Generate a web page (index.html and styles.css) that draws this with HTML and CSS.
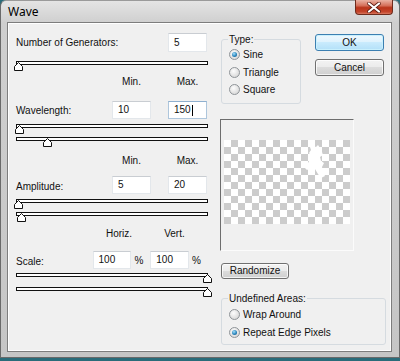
FILE: index.html
```html
<!DOCTYPE html>
<html>
<head>
<meta charset="utf-8">
<title>Wave</title>
<link rel="stylesheet" href="styles.css">
</head>
<body>
<div class="window">
  <div class="titlebar">
    <span class="title">Wave</span>
    <div class="close">
      <svg width="14" height="11" viewBox="0 0 14 11"><path d="M2 1.5 L12 9.5 M12 1.5 L2 9.5" stroke="#5a1a10" stroke-width="3.6" stroke-linecap="round"/><path d="M2 1.5 L12 9.5 M12 1.5 L2 9.5" stroke="#fff" stroke-width="2.2" stroke-linecap="round"/></svg>
    </div>
  </div>
  <div class="client">
    <div class="left">
      <div class="pair gen"><span class="label">Number of Generators:</span><span class="box c3">5</span></div>
      <div class="slider s1"><div class="track"></div><svg class="thumb" style="left:-2px" width="9" height="9" viewBox="0 0 9 9"><path d="M0.5 8.5 V4.5 L4.5 0.5 L8.5 4.5 V8.5 Z"/></svg></div>
      <div class="pair heads h1"><span class="c2">Min.</span><span class="c3">Max.</span></div>
      <div class="pair wl"><span class="label">Wavelength:</span><span class="box c2">10</span><span class="box c3 focus">150<i class="caret"></i></span></div>
      <div class="slider s2"><div class="track"></div><svg class="thumb" style="left:-1px" width="9" height="9" viewBox="0 0 9 9"><path d="M0.5 8.5 V4.5 L4.5 0.5 L8.5 4.5 V8.5 Z"/></svg></div>
      <div class="slider"><div class="track"></div><svg class="thumb" style="left:27px" width="9" height="9" viewBox="0 0 9 9"><path d="M0.5 8.5 V4.5 L4.5 0.5 L8.5 4.5 V8.5 Z"/></svg></div>
      <div class="pair heads h2"><span class="c2">Min.</span><span class="c3">Max.</span></div>
      <div class="pair amp"><span class="label low">Amplitude:</span><span class="box c2">5</span><span class="box c3">20</span></div>
      <div class="slider s2"><div class="track"></div><svg class="thumb" style="left:-2px" width="9" height="9" viewBox="0 0 9 9"><path d="M0.5 8.5 V4.5 L4.5 0.5 L8.5 4.5 V8.5 Z"/></svg></div>
      <div class="slider"><div class="track"></div><svg class="thumb" style="left:1px" width="9" height="9" viewBox="0 0 9 9"><path d="M0.5 8.5 V4.5 L4.5 0.5 L8.5 4.5 V8.5 Z"/></svg></div>
      <div class="scale-heads"><span class="hz">Horiz.</span><span class="vt">Vert.</span></div>
      <div class="scale"><span class="label low">Scale:</span><span class="box">100</span><span class="pct">%</span><span class="box">100</span><span class="pct">%</span></div>
      <div class="slider s3"><div class="track"></div><svg class="thumb" style="left:187px" width="9" height="9" viewBox="0 0 9 9"><path d="M0.5 8.5 V4.5 L4.5 0.5 L8.5 4.5 V8.5 Z"/></svg></div>
      <div class="slider s4"><div class="track"></div><svg class="thumb" style="left:187px" width="9" height="9" viewBox="0 0 9 9"><path d="M0.5 8.5 V4.5 L4.5 0.5 L8.5 4.5 V8.5 Z"/></svg></div>
    </div>
    <div class="right">
      <div class="top">
        <fieldset class="group type">
          <legend>Type:</legend>
          <div class="opt"><span class="radio on"></span>Sine</div>
          <div class="opt"><span class="radio"></span>Triangle</div>
          <div class="opt"><span class="radio"></span>Square</div>
        </fieldset>
        <div class="buttons">
          <div class="btn default">OK</div>
          <div class="btn">Cancel</div>
        </div>
      </div>
      <div class="preview">
        <div class="checker">
          <svg class="blob" width="24" height="36" viewBox="0 0 24 36"><path d="M6 1 L9 0 L10 3 L13 4 L15 2 L17 5 L16 8 L19 9 L20 12 L17 14 L18 18 L21 20 L19 24 L20 29 L22 33 L18 35 L15 31 L12 26 L8 25 L4 27 L1 24 L3 21 L6 19 L5 16 L8 13 L6 10 L8 7 Z" fill="#fff"/></svg>
        </div>
      </div>
      <div class="btn rand">Randomize</div>
      <fieldset class="group undef">
        <legend>Undefined Areas:</legend>
        <div class="opt"><span class="radio"></span>Wrap Around</div>
        <div class="opt"><span class="radio on"></span>Repeat Edge Pixels</div>
      </fieldset>
    </div>
  </div>
</div>
</body>
</html>
```

FILE: styles.css
```css
html, body {
  margin: 0;
  padding: 0;
}
body {
  width: 400px;
  height: 361px;
  overflow: hidden;
  background: #2a6c7a;
  font-family: "Liberation Sans", Arial, sans-serif;
  font-size: 10px;
  color: #111;
}
.window {
  box-sizing: border-box;
  width: 400px;
  height: 358px;
  border: 1px solid #6a6a6a;
  border-top-color: #9a9a9a;
  border-radius: 6px 6px 0 0;
  background: linear-gradient(#e4e4e4, #cfcfcf 22px, #c6c6c6);
  padding: 0 7px 5px 6px;
  display: flex;
  flex-direction: column;
}
.titlebar {
  height: 21px;
  display: flex;
  justify-content: space-between;
  align-items: center;
}
.title {
  font-family: "Noto Sans", "DejaVu Sans", sans-serif;
  font-size: 12px;
  margin-left: 1px;
  color: #000;
}
.close {
  box-sizing: border-box;
  align-self: flex-start;
  width: 38px;
  height: 15px;
  margin-top: -1px;
  margin-right: -1px;
  border: 1px solid #6e2b1c;
  border-top: none;
  border-radius: 0 0 4px 4px;
  background: linear-gradient(#eab2a3, #d5705a 40%, #b9341a 55%, #c4452b 85%, #d9785f);
  display: flex;
  align-items: center;
  justify-content: center;
}
.client {
  flex: 1;
  background: #f0f0f0;
  border: 1px solid #7d7d7d;
  box-shadow: inset 0 0 0 1px #fff;
  display: flex;
}
.left {
  width: 192px;
  margin-left: 8px;
  display: flex;
  flex-direction: column;
}
.pair {
  display: grid;
  grid-template-columns: 79px 39px 39px;
  column-gap: 17px;
  height: 18px;
  align-items: center;
}
.label { grid-column: 1; white-space: nowrap; }
.label.low { position: relative; top: 1px; }
.gen .label { grid-column: 1 / 3; }
.c2 { grid-column: 2; }
.c3 { grid-column: 3; }
.gen { margin-top: 10px; height: 19px; }
.gen .box { height: 19px; }
.heads { height: 14px; }
.heads span { text-align: center; }
.box {
  box-sizing: border-box;
  width: 39px;
  height: 18px;
  background: #fff;
  border: 1px solid #e3e7eb;
  border-top-color: #c9cdd2;
  padding-left: 5px;
  line-height: 16px;
  display: flex;
  align-items: center;
}
.box.focus { border-color: #aec6dc; border-top-color: #8fb0cf; }
.caret {
  display: inline-block;
  width: 1px;
  height: 11px;
  background: #000;
  margin-left: 1px;
}
.slider {
  position: relative;
  height: 13px;
}
.track {
  box-sizing: border-box;
  width: 192px;
  height: 4px;
  border: 1px solid #111;
  background: #fff;
}
.thumb {
  position: absolute;
  top: 1px;
}
.thumb path { fill: #fff; stroke: #111; stroke-width: 1; }
.s1 { margin-top: 9px; }
.wl { margin-top: 13px; }
.s2 { margin-top: 5px; }
.h2 { margin-top: 3px; }
.amp { margin-top: 9px; }
.scale-heads {
  margin-top: 1px;
  height: 14px;
  display: flex;
  align-items: center;
}
.hz { margin-left: 90px; }
.vt { margin-left: 32px; }
.scale {
  margin-top: 11px;
  height: 18px;
  display: flex;
  align-items: center;
}
.scale .label { width: 77px; }
.pct { width: 19px; padding-left: 3px; box-sizing: border-box; }
.s3 { margin-top: 4px; }
.s4 { margin-top: 1px; }

.right {
  width: 166px;
  margin-left: 12px;
  display: flex;
  flex-direction: column;
}
.top {
  margin-top: 10px;
  display: flex;
  align-items: flex-start;
}
.group {
  margin: 0 0 0 1px;
  padding: 0 0 0 7px;
  border: 1px solid #d5dbe0;
  border-radius: 3px;
  min-width: 0;
}
.group legend {
  padding: 0 1px;
  margin-left: -1px;
  line-height: 13px;
}
.type {
  width: 80px;
  box-sizing: border-box;
  height: 71px;
  padding-bottom: 5px;
}
.opt {
  display: flex;
  align-items: center;
  height: 17.5px;
  gap: 3px;
  white-space: nowrap;
}
.radio {
  box-sizing: border-box;
  width: 11px;
  height: 11px;
  border-radius: 50%;
  border: 1px solid #8f9498;
  background: radial-gradient(circle at 40% 35%, #fdfdfd, #d8d8d8 80%);
  display: flex;
  align-items: center;
  justify-content: center;
}
.radio.on::after {
  content: "";
  width: 5px;
  height: 5px;
  border-radius: 50%;
  background: radial-gradient(circle at 40% 35%, #a6e0fb, #2a86bd 55%, #0f4f80);
}
.buttons {
  margin-left: 14px;
  margin-top: 1px;
  display: flex;
  flex-direction: column;
  gap: 8px;
}
.btn {
  box-sizing: border-box;
  width: 69px;
  height: 17px;
  border: 1px solid #707070;
  border-radius: 3px;
  background: linear-gradient(#f3f3f3, #ebebeb 50%, #dcdcdc 50%, #cfcfcf);
  box-shadow: inset 0 0 0 1px rgba(255,255,255,0.75);
  text-align: center;
  line-height: 15px;
}
.btn.default {
  border-color: #3c7fb1;
  background: linear-gradient(#eef8fe, #def2fd 50%, #c9ebfd 50%, #b3e0f8);
  box-shadow: inset 0 0 0 1px #c9f0fd;
}
.preview {
  box-sizing: border-box;
  width: 134px;
  height: 132px;
  margin-top: 15px;
  border: 1px solid;
  border-color: #6d6d6d #fbfbfb #fbfbfb #6d6d6d;
  display: flex;
  justify-content: center;
  padding-top: 20px;
}
.checker {
  position: relative;
  width: 126px;
  height: 84px;
  background: repeating-conic-gradient(#cccccc 0 25%, #ffffff 0 50%) 0 0 / 14px 14px;
}
.blob {
  position: absolute;
  left: 79px;
  top: 3px;
}
.rand {
  width: 68px;
  height: 16px;
  line-height: 14px;
  margin: 12px 0 0 1px;
}
.undef {
  margin-top: 13px;
  width: 165px;
  box-sizing: border-box;
  padding-bottom: 3px;
}
.undef .opt { height: 18px; }
```
